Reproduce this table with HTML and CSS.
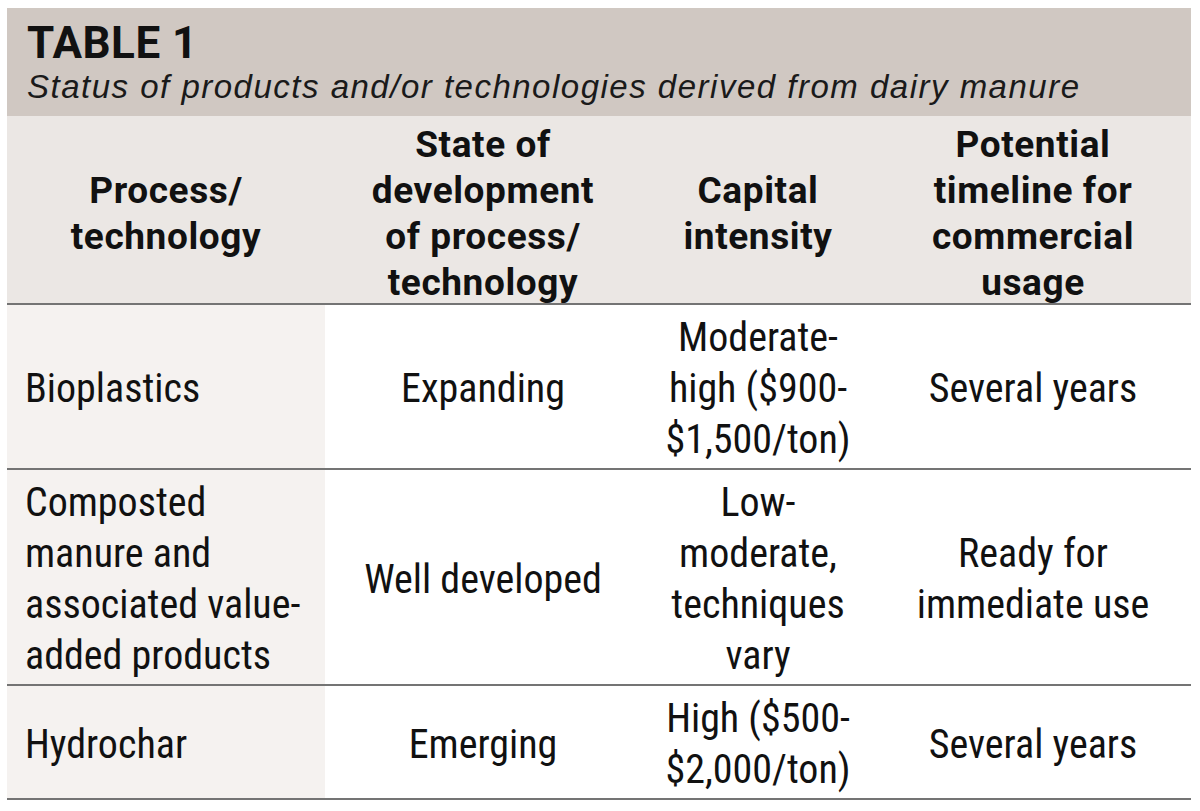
FILE: index.html
```html
<!DOCTYPE html>
<html lang="en">
<head>
<meta charset="utf-8">
<title>Table 1</title>
<link rel="stylesheet" href="styles.css">
</head>
<body>
<div class="table">
  <div class="caption">
    <div class="caption-title">TABLE 1</div>
    <div class="caption-sub">Status of products and/or technologies derived from dairy manure</div>
  </div>
  <div class="row head">
    <div class="cell">Process/<br>technology</div>
    <div class="cell">State of<br>development<br>of process/<br>technology</div>
    <div class="cell">Capital<br>intensity</div>
    <div class="cell">Potential<br>timeline for<br>commercial<br>usage</div>
  </div>
  <div class="row body">
    <div class="cell first">Bioplastics</div>
    <div class="cell">Expanding</div>
    <div class="cell">Moderate-<br>high ($900-<br>$1,500/ton)</div>
    <div class="cell">Several years</div>
  </div>
  <div class="row body">
    <div class="cell first">Composted<br>manure and<br>associated value-<br>added products</div>
    <div class="cell">Well developed</div>
    <div class="cell">Low-<br>moderate,<br>techniques<br>vary</div>
    <div class="cell">Ready for<br>immediate use</div>
  </div>
  <div class="row body">
    <div class="cell first">Hydrochar</div>
    <div class="cell">Emerging</div>
    <div class="cell">High ($500-<br>$2,000/ton)</div>
    <div class="cell">Several years</div>
  </div>
</div>
</body>
</html>
```

FILE: styles.css
```css
html, body {
  margin: 0;
  padding: 0;
  background: #ffffff;
}

body {
  padding: 8px 9px 0 7px;
  color: #111111;
}

.table {
  width: 1184px;
}

.caption {
  background: #d0c8c2;
  height: 108px;
  padding: 0 0 0 20px;
  box-sizing: border-box;
  display: flex;
  flex-direction: column;
}

.caption-title {
  font-family: Roboto, "DejaVu Sans", sans-serif;
  font-weight: 700;
  font-size: 44px;
  line-height: 44px;
  margin-top: 13px;
  letter-spacing: 0.5px;
}

.caption-sub {
  font-family: "Liberation Sans", Arial, sans-serif;
  font-style: italic;
  font-size: 33px;
  line-height: 38px;
  letter-spacing: 1.5px;
  margin-top: 3px;
  color: #1a1a1a;
}

.row {
  display: grid;
  grid-template-columns: 318px 316px 234px 1fr;
  border-bottom: 2px solid #747474;
}

.cell {
  display: flex;
  align-items: center;
  justify-content: center;
  text-align: center;
}

.head {
  background: #ebe7e4;
  height: 189px;
  box-sizing: border-box;
  font-family: Roboto, "DejaVu Sans", sans-serif;
  font-weight: 700;
  font-size: 37px;
  line-height: 46px;
  letter-spacing: 0.6px;
  padding-top: 6px;
}

.body {
  font-family: Roboto, "Liberation Sans", sans-serif;
  font-stretch: condensed;
  font-size: 40px;
  line-height: 51px;
}

.body .cell {
  padding: 7px 0 3px;
}

.body .first {
  background: #f5f2f0;
  justify-content: flex-start;
  text-align: left;
  padding-left: 18px;
}
```
